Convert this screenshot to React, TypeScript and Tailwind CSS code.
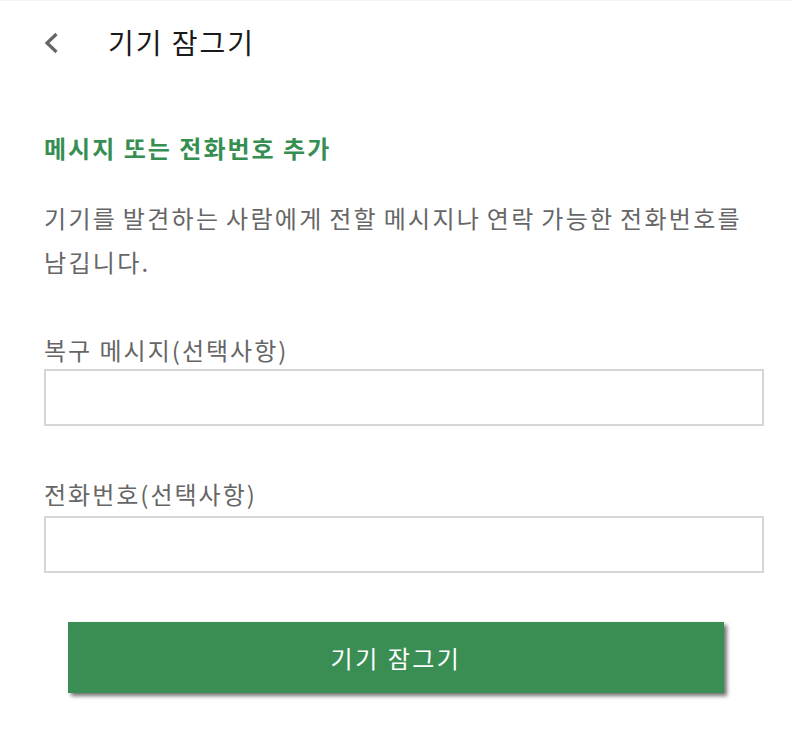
export default function App() {
  const font = { fontFamily: '"Noto Sans CJK KR", "Noto Sans", sans-serif' };

  return (
    <div className="min-h-[736px] bg-white" style={font}>
      {/* Header */}
      <header className="h-[84px] flex items-center border-t border-[#f4f4f4]">
        <button className="w-[54px] h-[54px] ml-[24px] flex items-center justify-center">
          <svg width="16" height="22" viewBox="0 0 16 22" fill="none">
            <path d="M13.5 2 L4 11 L13.5 20" stroke="#666666" strokeWidth="3.2" />
          </svg>
        </button>
        <h1 className="ml-[30px] text-[28px] tracking-[2px] text-[#1a1a1a] leading-none -mt-[2px]">기기 잠그기</h1>
      </header>

      <main className="px-[44px] pt-[44px]">
        <h2 className="text-[24px] tracking-[2px] font-bold text-[#378e52] leading-[40px]">메시지 또는 전화번호 추가</h2>

        <p className="mt-[28px] text-[24px] tracking-[2.3px] [word-spacing:-2px] break-keep text-[#666666] leading-[44px]">
          기기를 발견하는 사람에게 전할 메시지나 연락 가능한 전화번호를 남깁니다.
        </p>

        <label className="block mt-[48px] text-[24px] tracking-[2px] text-[#666666] leading-[36px]">복구 메시지(선택사항)</label>
        <input
          type="text"
          className="block mt-[1px] w-[720px] h-[57px] border-2 border-[#d6d6d6] outline-none px-3 text-[22px]"
        />

        <label className="block mt-[50px] text-[24px] tracking-[2px] text-[#666666] leading-[36px]">전화번호(선택사항)</label>
        <input
          type="tel"
          className="block mt-[4px] w-[720px] h-[57px] border-2 border-[#d6d6d6] outline-none px-3 text-[22px]"
        />

        <div className="flex mt-[49px] ml-[24px]">
          <button className="w-[656px] h-[71px] bg-[#3a8e54] text-white text-[24px] tracking-[2.5px] shadow-[3px_3px_4px_rgba(0,0,0,0.55)]">
            기기 잠그기
          </button>
        </div>
      </main>
    </div>
  );
}
